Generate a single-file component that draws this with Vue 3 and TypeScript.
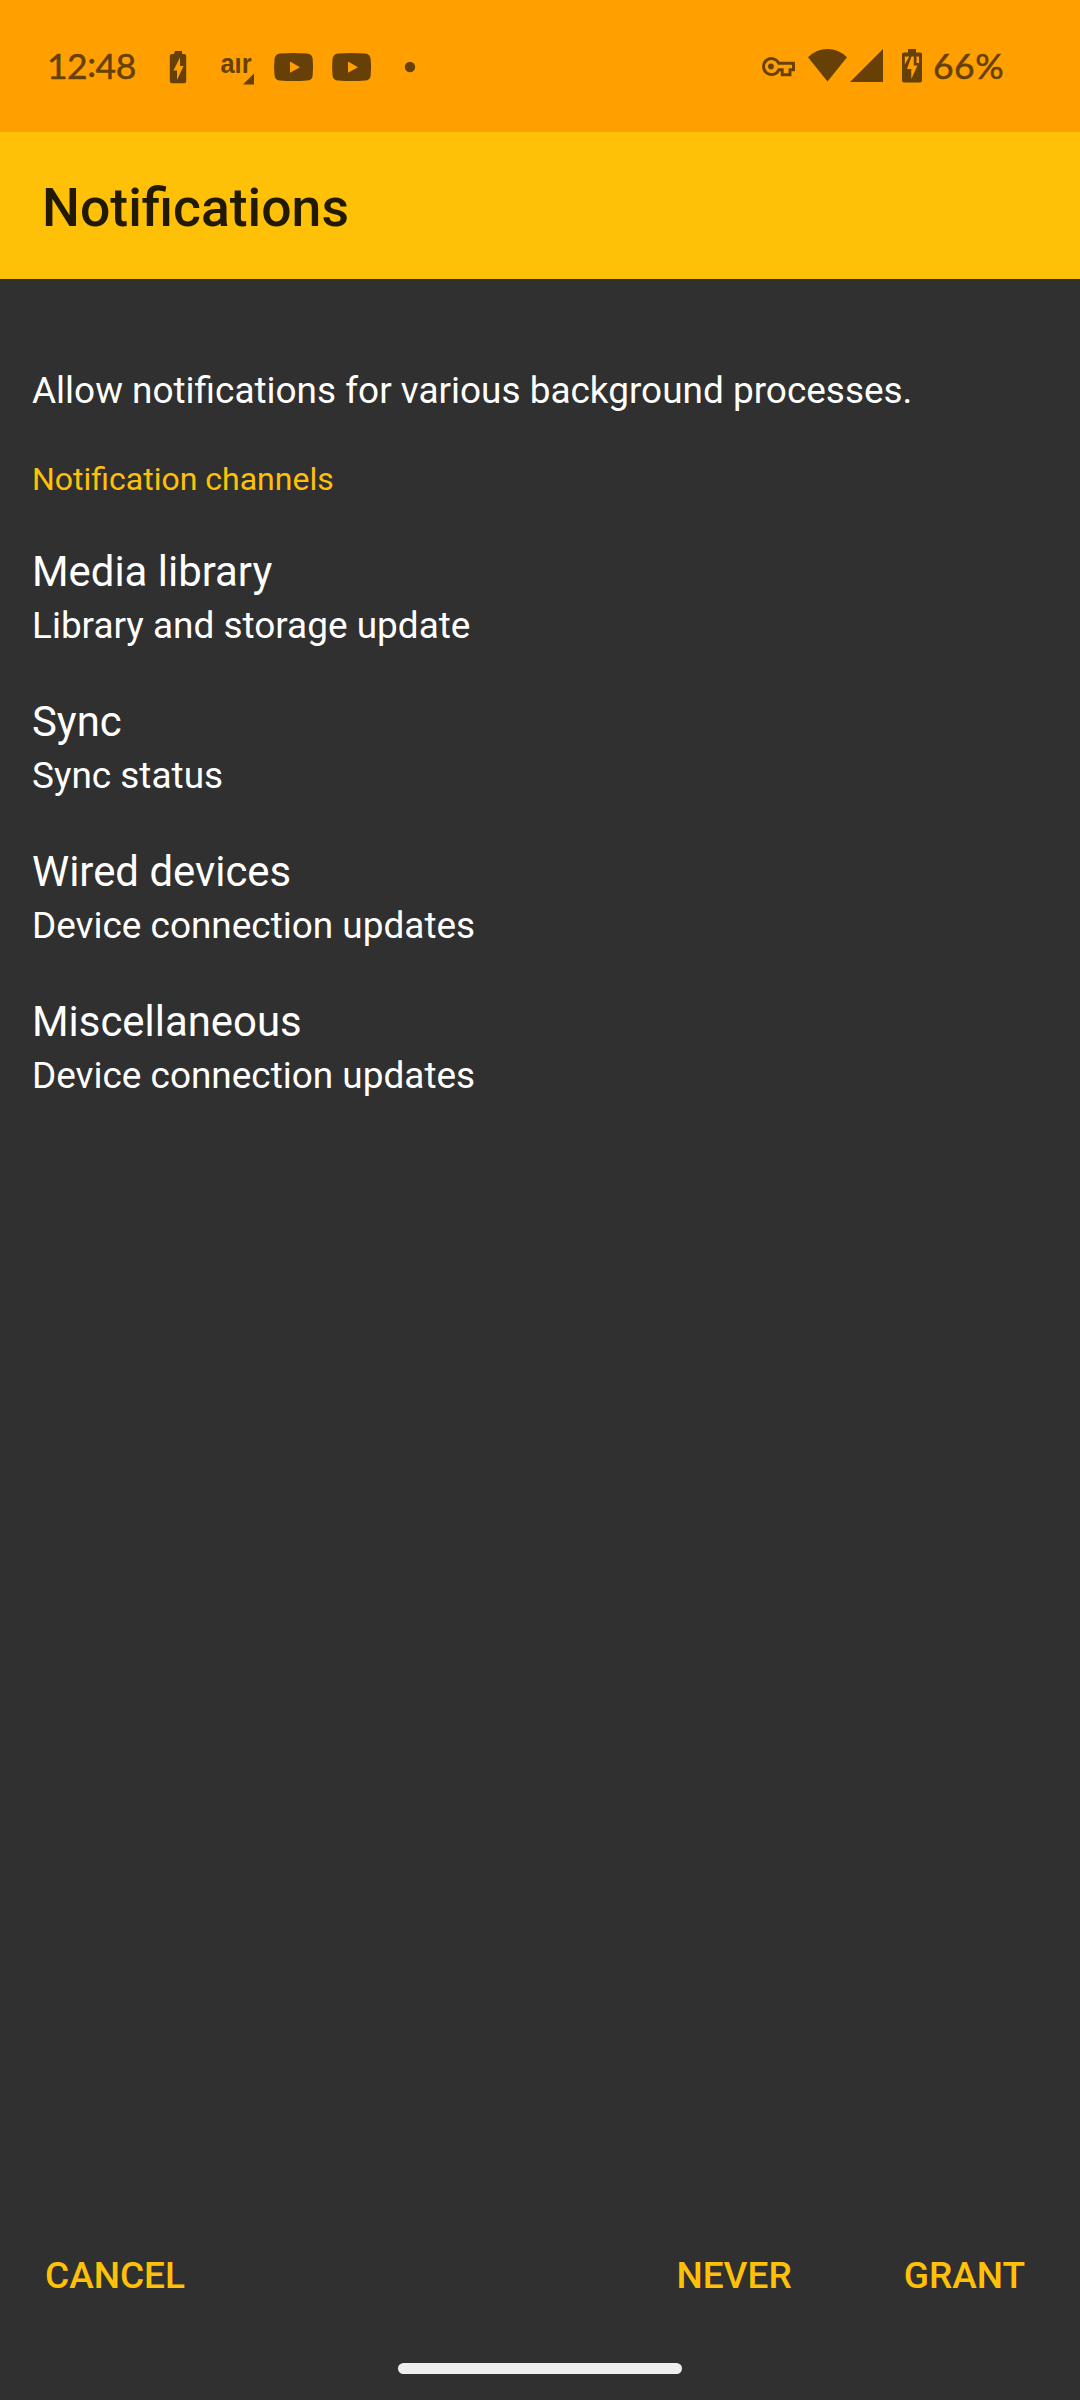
<script setup lang="ts">
interface Channel {
  name: string
  description: string
}

const channels: Channel[] = [
  { name: 'Media library', description: 'Library and storage update' },
  { name: 'Sync', description: 'Sync status' },
  { name: 'Wired devices', description: 'Device connection updates' },
  { name: 'Miscellaneous', description: 'Device connection updates' },
]
</script>

<template>
  <div class="screen">
    <header class="status">
      <span class="clock">12<span class="colon">:</span>48</span>
      <svg class="left-icons" width="256" height="40" viewBox="164 46 256 40">
        <path
          fill-rule="evenodd"
          d="M175 51h7v3h2.200q2 0 2 2v25.200q0 2-2 2h-12.400q-2 0-2-2V56q0-2 2-2h2.200zM180 66V57.500L173.500 70.500H177V80L183.500 66z"
        />
        <text class="air" x="220.500" y="72.800" textLength="31" lengthAdjust="spacingAndGlyphs">aır</text>
        <path d="M254 73.500V84.500H243z" />
        <path
          v-for="dx in [0, 58]"
          :key="dx"
          :transform="`translate(${dx} 0)`"
          fill-rule="evenodd"
          d="M280 53.600Q293.500 52.400 307 53.600Q312 54 312.600 58.500Q313.600 67 312.600 76Q312 80.300 307 80.600Q293.500 81.600 280 80.600Q275.500 80.300 274.600 76Q273.500 67 274.600 58.500Q275.500 54 280 53.600zM290 61.600V72.800L300 67.200z"
        />
        <circle cx="410" cy="67" r="5.200" />
      </svg>
      <svg class="right-icons" width="166" height="40" viewBox="760 46 166 40">
        <path
          class="key"
          d="M778.800 63.300A8 8 0 1 0 778.800 69.800H782.200V74.700H790V69.800H793.500V63.300z"
        />
        <circle cx="771" cy="66.500" r="2.900" />
        <path d="M808 57.200Q816.500 49 827.500 49T847 57.200L827.500 81.500z" />
        <path d="M883 49V82H850z" />
        <path
          fill-rule="evenodd"
          d="M908 49h8v3.500h4q2 0 2 2v26q0 2-2 2h-16q-2 0-2-2v-26q0-2 2-2h4zM904.800 56.500V64.500L909.300 56.500zM911.500 56.500L907 69H911.300V79L917.500 65.500H913.800V56.500zM916.500 56.500V63H919V56.500z"
        />
      </svg>
      <span class="percent">66%</span>
    </header>

    <div class="app-bar">
      <h1>Notifications</h1>
    </div>

    <main>
      <p class="intro">Allow notifications for various background processes.</p>
      <h2>Notification channels</h2>
      <ul>
        <li v-for="channel in channels" :key="channel.name">
          <div class="name">{{ channel.name }}</div>
          <div class="description">{{ channel.description }}</div>
        </li>
      </ul>
    </main>

    <footer>
      <button type="button">CANCEL</button>
      <button type="button" class="never">NEVER</button>
      <button type="button">GRANT</button>
    </footer>
    <div class="nav"><div class="handle"></div></div>
  </div>
</template>

<style>
body {
  margin: 0;
  background: #303030;
}
</style>

<style scoped>
.screen {
  width: 1080px;
  height: 2400px;
  display: flex;
  flex-direction: column;
  background: #303030;
  color: #fff;
  font-family: Roboto, sans-serif;
  overflow: hidden;
}

.status {
  height: 132px;
  flex: none;
  box-sizing: border-box;
  padding: 0 75px 0 47px;
  display: flex;
  align-items: center;
  background: #ffa000;
  color: #664006;
}

.status svg {
  flex: none;
  fill: currentColor;
}

.status .key {
  fill: none;
  stroke: currentColor;
  stroke-width: 2.900px;
}

.clock,
.percent {
  font-family: Lato, sans-serif;
  font-size: 35.500px;
  line-height: 40px;
  white-space: nowrap;
  -webkit-text-stroke: 0.500px currentColor;
}

.clock {
  width: 117px;
  letter-spacing: -0.500px;
}

.colon {
  position: relative;
  top: -2px;
}

.right-icons {
  margin-left: auto;
}

.percent {
  width: 72px;
  margin-left: 7px;
  letter-spacing: 0.500px;
}

.air {
  font-family: "Liberation Sans", sans-serif;
  font-weight: 700;
  font-size: 27.500px;
}

.app-bar {
  height: 147px;
  flex: none;
  box-sizing: border-box;
  padding: 5px 42px 0;
  display: flex;
  align-items: center;
  background: #ffc107;
  color: #211900;
}

h1 {
  margin: 0;
  font-size: 53.500px;
  font-weight: 500;
  line-height: 62px;
}

main {
  flex: 1;
  padding: 90px 32px 0;
}

.intro {
  margin: 0;
  font-size: 36.950px;
  line-height: 44px;
}

h2 {
  margin: 47px 0 0;
  font-size: 32px;
  font-weight: 400;
  line-height: 38px;
  color: #ffc107;
}

ul {
  margin: 49px 0 0;
  padding: 0;
  list-style: none;
}

li {
  height: 150px;
}

.name {
  font-size: 41.900px;
  line-height: 50px;
}

.description {
  margin-top: 7px;
  font-size: 36.950px;
  line-height: 44px;
}

footer {
  height: 126px;
  flex: none;
  box-sizing: border-box;
  padding: 2px 55px 0 45px;
  display: flex;
  align-items: center;
}

button {
  padding: 0;
  border: 0;
  background: none;
  font: 500 37px/44px Roboto, sans-serif;
  color: #ffc107;
}

.never {
  margin-left: auto;
  margin-right: 112px;
}

.nav {
  height: 62px;
  flex: none;
  display: flex;
  justify-content: center;
  align-items: flex-start;
}

.handle {
  width: 284px;
  height: 11px;
  margin-top: 25px;
  border-radius: 6px;
  background: #eee;
}
</style>
